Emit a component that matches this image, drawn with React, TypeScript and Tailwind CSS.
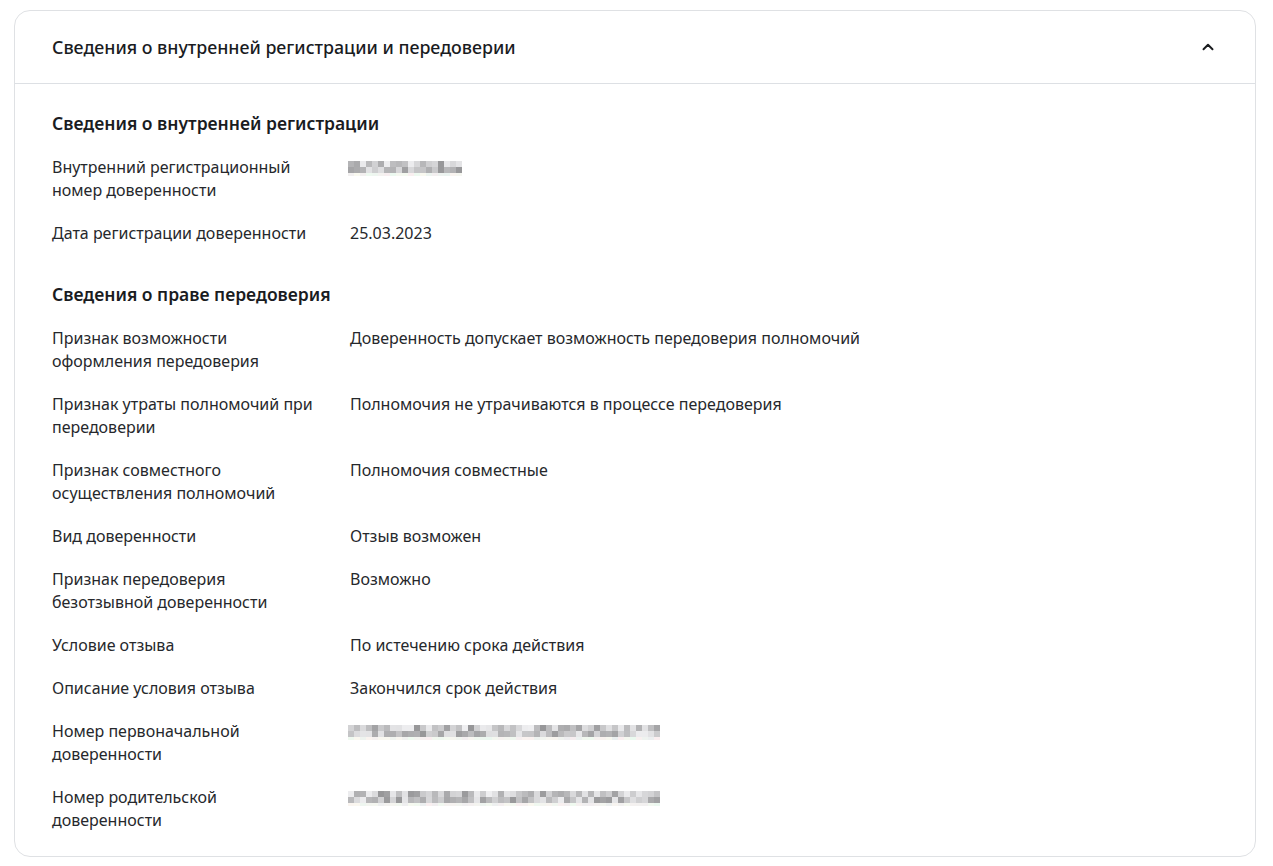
import { ChevronUp } from 'lucide-react'

type Row = { label: string; value?: string; blur?: number }

const registration: Row[] = [
  { label: 'Внутренний регистрационный номер доверенности', blur: 116 },
  { label: 'Дата регистрации доверенности', value: '25.03.2023' },
]

const transfer: Row[] = [
  {
    label: 'Признак возможности оформления передоверия',
    value: 'Доверенность допускает возможность передоверия полномочий',
  },
  {
    label: 'Признак утраты полномочий при передоверии',
    value: 'Полномочия не утрачиваются в процессе передоверия',
  },
  { label: 'Признак совместного осуществления полномочий', value: 'Полномочия совместные' },
  { label: 'Вид доверенности', value: 'Отзыв возможен' },
  { label: 'Признак передоверия безотзывной доверенности', value: 'Возможно' },
  { label: 'Условие отзыва', value: 'По истечению срока действия' },
  { label: 'Описание условия отзыва', value: 'Закончился срок действия' },
  { label: 'Номер первоначальной доверенности', blur: 316 },
  { label: 'Номер родительской доверенности', blur: 316 },
]

// pixelated placeholder for masked values
function Blurred({ width, seed }: { width: number; seed: number }) {
  const cells = Math.floor(width / 6)
  let s = seed
  const rnd = () => {
    s = (s * 9301 + 49297) % 233280
    return s / 233280
  }
  const shade = () => {
    const v = Math.round(150 + rnd() * 90)
    return `rgb(${v},${v},${v + 2})`
  }
  const rows = [0, 1, 2].map((r) =>
    Array.from({ length: cells }, () =>
      r === 2 ? `rgb(${235 + Math.round(rnd() * 15)},${238 + Math.round(rnd() * 12)},240)` : shade()
    )
  )
  return (
    <div className="flex flex-col pt-[4px]">
      {rows.map((row, i) => (
        <div key={i} className={i === 2 ? 'flex h-[3px]' : 'flex h-[6px]'}>
          {row.map((c, j) => (
            <span key={j} className="w-[6px] h-full" style={{ backgroundColor: c }} />
          ))}
        </div>
      ))}
    </div>
  )
}

function InfoRow({ row, idx }: { row: Row; idx: number }) {
  return (
    <div className="grid grid-cols-[266px_1fr] gap-x-[32px]">
      <span>{row.label}</span>
      {row.blur ? (
        <div className="pt-[1px] -ml-[2px]">
          <Blurred width={row.blur} seed={idx * 7 + 3} />
        </div>
      ) : (
        <span>{row.value}</span>
      )}
    </div>
  )
}

function Section({ title, rows, offset }: { title: string; rows: Row[]; offset: number }) {
  return (
    <div className="flex flex-col">
      <h3 className="text-[17.5px] leading-[24px] font-semibold text-[#1a1c1f]">{title}</h3>
      <div className="flex flex-col gap-[20px] mt-[21px] text-[16px] leading-[23px] text-[#26282c]">
        {rows.map((r, i) => (
          <InfoRow key={r.label} row={r} idx={offset + i} />
        ))}
      </div>
    </div>
  )
}

export default function App() {
  return (
    <div
      className="min-h-[866px] bg-white pt-[10px] pl-[14px] pr-[17px] pb-[11px]"
      style={{ fontFamily: '"Noto Sans", "Open Sans", sans-serif' }}
    >
      <div className="rounded-[16px] border border-[#dfe1e4] bg-white">
        <div className="flex items-center justify-between h-[73px] px-[37px] border-b border-[#dde0e4]">
          <h2 className="text-[17.8px] font-medium text-[#1a1c1f]">
            Сведения о внутренней регистрации и передоверии
          </h2>
          <ChevronUp className="w-[18px] h-[18px] text-[#1a1c1f] mr-[1px]" strokeWidth={2.6} />
        </div>
        <div className="flex flex-col gap-[37px] px-[37px] pt-[27px] pb-[24px]">
          <Section title="Сведения о внутренней регистрации" rows={registration} offset={0} />
          <Section title="Сведения о праве передоверия" rows={transfer} offset={5} />
        </div>
      </div>
    </div>
  )
}
